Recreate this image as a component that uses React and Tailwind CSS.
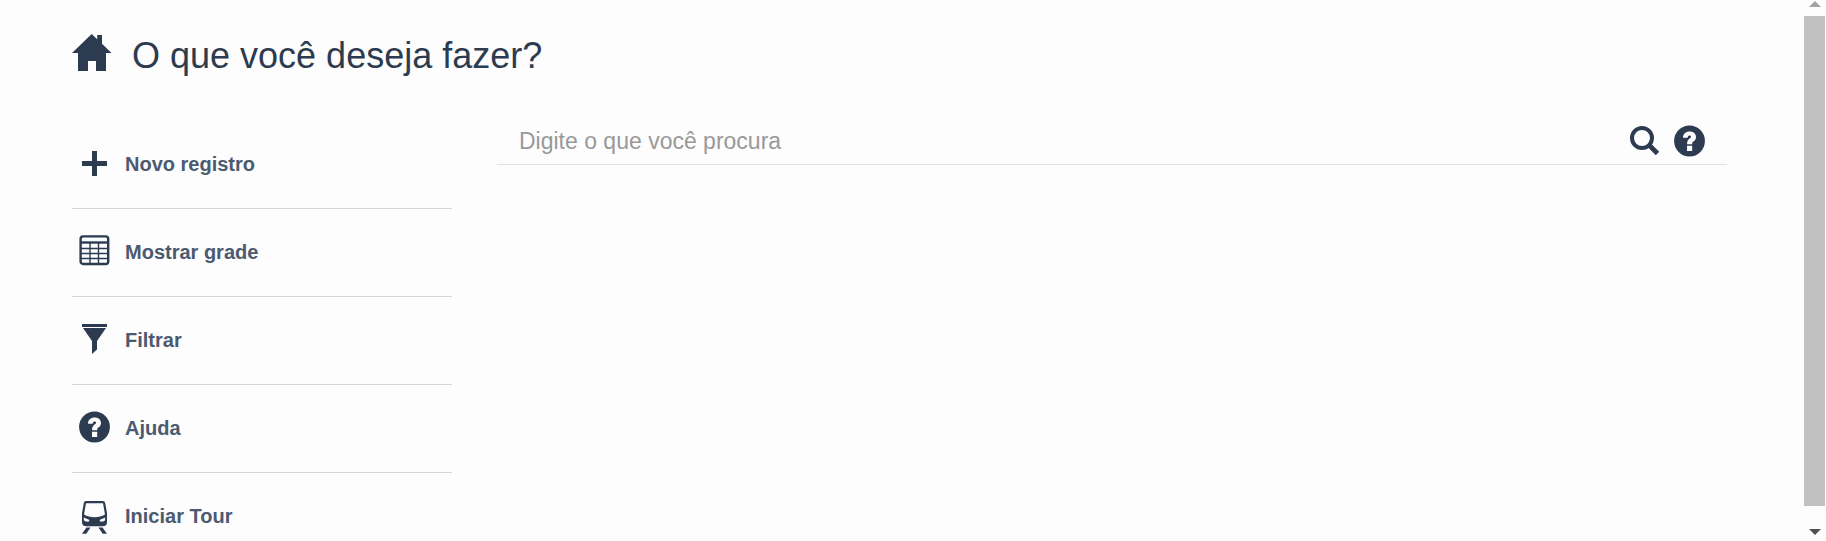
// Home screen: action menu on the left, search field on the right

// ─── Icons ────────────────────────────────────────────────────────────────────
function HomeIcon() {
  return (
    <svg className="w-10 h-10 shrink-0" viewBox="0 0 40 40" fill="currentColor" aria-hidden="true">
      <path d="M19.7 0 25.2 5.2V1H30V9.8L39.5 19H34V37H24V27H16V37H6V19H0Z" />
    </svg>
  );
}

function PlusIcon() {
  return (
    <svg className="w-8 h-9 shrink-0" viewBox="0 0 32 36" fill="currentColor" aria-hidden="true">
      <path d="M13 4h5v10h10v5H18v10h-5V19H3v-5h10Z" />
    </svg>
  );
}

function GridIcon() {
  return (
    <svg className="w-8 h-9 shrink-0" viewBox="0 0 32 36" fill="none" stroke="currentColor" aria-hidden="true">
      <rect x="1.6" y="1.4" width="27.6" height="27.6" rx="2.5" strokeWidth="2.4" />
      <path d="M1 7.5h29" strokeWidth="2.4" />
      <path d="M2 13.5h27M2 18.500h27M2 23.500h27M11 8v21M19.500 8v21" strokeWidth="1.400" />
    </svg>
  );
}

function FilterIcon() {
  return (
    <svg className="w-8 h-9 shrink-0" viewBox="0 0 32 36" fill="currentColor" aria-hidden="true">
      <path d="M3 1h25v3H3ZM4 5h23L18 18v8.500L13 31V18Z" />
    </svg>
  );
}

function HelpIcon() {
  return (
    <svg className="w-8 h-9 shrink-0" viewBox="0 0 32 36" aria-hidden="true">
      <circle cx="15.5" cy="16" r="15.4" fill="currentColor" />
      <path
        d="M9 12.700C9.100 8.800 11.600 6.500 15.600 6.500c3.700 0 6.400 2.100 6.400 5.400 0 2.200-1 3.400-2.600 4.600-1.100.8-1.200 1.300-1.200 2.700h-5.100c0-3.100.8-4.300 2.500-5.600 1-.8 1.400-1.200 1.400-1.900 0-.9-.6-1.300-1.500-1.300-1.100 0-1.700.8-1.800 2.300ZM13 20.700h5.200v5.200H13Z"
        fill="#fdfdfd"
      />
    </svg>
  );
}

function TrainIcon() {
  return (
    <svg className="w-8 h-9 shrink-0" viewBox="0 0 32 36" fill="currentColor" aria-hidden="true">
      <path
        fillRule="evenodd"
        d="M7.500 2h16c1.600 0 2.500.7 2.700 2.200L28 14v9c0 3-1.500 4-4.500 4.200h-16C4.500 27 3 26 3 23v-9L4.800 4.200C5 2.700 5.900 2 7.500 2ZM7 4.200 5 15.500c3 1.900 6.900 2.700 10.500 2.700s7.500-.8 10.500-2.700L24 4.200ZM4.800 18.500v1.800c0 1.700 1.500 2.500 4.700 2.500l1-1.800ZM26.200 18.500 20.500 21l1 1.800c3.200 0 4.700-.8 4.700-2.500Z"
      />
      <path d="M7.500 28.500h4L7.300 34.700H3ZM19.500 28.500h4l4.500 6.200h-4.300Z" />
    </svg>
  );
}

function SearchIcon() {
  return (
    <svg className="w-8 h-9 shrink-0" viewBox="0 0 32 36" fill="none" stroke="currentColor" aria-hidden="true">
      <circle cx="12" cy="13" r="10" strokeWidth="4" />
      <path d="M18.500 19.500 27.500 28.500" strokeWidth="4.800" />
    </svg>
  );
}

// ─── Menu ─────────────────────────────────────────────────────────────────────
const ACTIONS = [
  { label: 'Novo registro', Icon: PlusIcon },
  { label: 'Mostrar grade', Icon: GridIcon },
  { label: 'Filtrar', Icon: FilterIcon },
  { label: 'Ajuda', Icon: HelpIcon },
  { label: 'Iniciar Tour', Icon: TrainIcon },
];

function ActionMenu() {
  return (
    <nav className="w-[380px] shrink-0 pt-[3px]">
      <ul>
        {ACTIONS.map(({ label, Icon }) => (
          <li key={label} className="border-b border-[#d5d6d7]">
            <button type="button" className="flex w-full items-start gap-[14px] pt-[26px] pb-[25px] pl-[7px] text-left cursor-pointer">
              <Icon />
              <span className="text-xl leading-[34px] font-bold text-[#4c5a70]">{label}</span>
            </button>
          </li>
        ))}
      </ul>
    </nav>
  );
}

// ─── Search ───────────────────────────────────────────────────────────────────
function SearchBar() {
  return (
    <form className="flex-1 min-w-0" onSubmit={e => e.preventDefault()}>
      <div className="flex items-start border-b border-[#e2e3e4] pl-[22px] pr-[21px]">
        <input
          type="search"
          aria-label="Digite o que você procura"
          placeholder="Digite o que você procura"
          className="h-[46px] flex-1 min-w-0 bg-transparent text-[23px] text-[#2c3b50] placeholder-[#999] outline-none"
        />
        <div className="flex gap-3 pt-[7px]">
          <button type="submit" aria-label="Pesquisar" className="cursor-pointer"><SearchIcon /></button>
          <button type="button" aria-label="Ajuda" className="cursor-pointer"><HelpIcon /></button>
        </div>
      </div>
    </form>
  );
}

// ─── Scroll rail ──────────────────────────────────────────────────────────────
function ScrollRail() {
  return (
    <div className="flex w-[22px] shrink-0 flex-col items-center pr-px" aria-hidden="true">
      <svg className="w-3 h-4" viewBox="0 0 12 16" fill="#a3a3a3"><path d="M6 1 12 7H0Z" /></svg>
      <div className="w-full flex-1 bg-[#c1c1c1]" />
      <svg className="w-3 h-[35px]" viewBox="0 0 12 35" fill="#505050"><path d="M0 23h12L6 29Z" /></svg>
    </div>
  );
}

export default function App() {
  return (
    <div className="flex h-screen overflow-hidden bg-[#fdfdfd] font-['Liberation_Sans',Arial,sans-serif] text-[#2c3b50]">
      <main className="flex-1 min-w-0 overflow-hidden pt-[34px] pl-[72px] pr-[77px]">
        <h1 className="mb-10 flex items-start gap-5 text-4xl leading-11">
          <HomeIcon />
          O que você deseja fazer?
        </h1>
        <div className="flex items-start gap-[45px]">
          <ActionMenu />
          <SearchBar />
        </div>
      </main>
      <ScrollRail />
    </div>
  );
}
